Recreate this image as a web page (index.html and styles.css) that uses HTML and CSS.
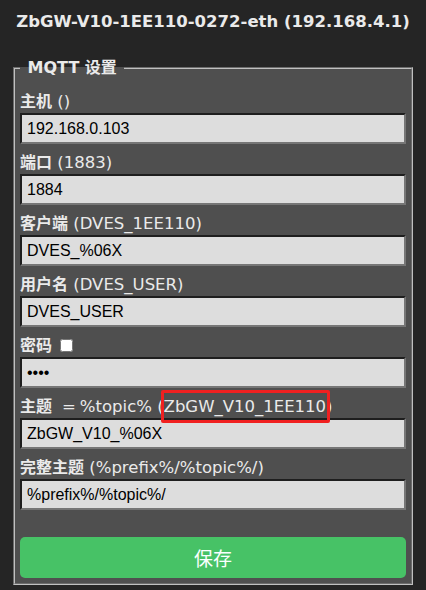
FILE: index.html
```html
<!DOCTYPE html>
<html>
<head>
  <meta charset="UTF-8">
  <meta name="viewport" content="width=device-width,initial-scale=1">
  <title>MQTT 设置</title>
  <link rel="stylesheet" href="styles.css">
</head>
<body>
  <div class="wrap">
    <h3 class="title">ZbGW-V10-1EE110-0272-eth (192.168.4.1)</h3>

    <fieldset class="box">
      <legend><b>&nbsp;MQTT 设置&nbsp;</b></legend>
      <form>
        <div class="field">
          <label><b>主机</b> ()</label>
          <input type="text" value="192.168.0.103">
        </div>
        <div class="field">
          <label><b>端口</b> (1883)</label>
          <input type="text" value="1884">
        </div>
        <div class="field">
          <label><b>客户端</b> (DVES_1EE110)</label>
          <input type="text" value="DVES_%06X">
        </div>
        <div class="field">
          <label><b>用户名</b> (DVES_USER)</label>
          <input type="text" value="DVES_USER">
        </div>
        <div class="field">
          <label><b>密码</b> <input type="checkbox" class="show"></label>
          <input type="password" value="1234">
        </div>
        <div class="field">
          <label><b>主题</b><span class="eq">=</span>%topic% (<span class="mark">ZbGW_V10_1EE110</span>)</label>
          <input type="text" value="ZbGW_V10_%06X">
        </div>
        <div class="field">
          <label><b>完整主题</b> (%prefix%/%topic%/)</label>
          <input type="text" value="%prefix%/%topic%/">
        </div>
        <button type="button" class="btn">保存</button>
      </form>
    </fieldset>
  </div>
</body>
</html>
```

FILE: styles.css
```css
body {
  margin: 0;
  background: #252525;
  color: #eaeaea;
  font-family: "DejaVu Sans", "Noto Sans CJK SC", sans-serif;
  font-size: 16px;
}
.wrap {
  padding: 0 13px;
}
.title {
  margin: 0 0 24px;
  padding-top: 10px;
  line-height: 24px;
  text-align: center;
  font-size: 16.5px;
  font-weight: bold;
}
.box {
  margin: 0;
  padding: 13px 5px 5px;
  background: #4f4f4f;
  border: 2px groove #c0c0c0;
}
.box legend {
  padding: 0 2px;
  line-height: 20px;
}
.field {
  margin-bottom: 8px;
}
.field label {
  display: block;
  line-height: 22px;
  font-size: 16.5px;
}
.field label b {
  font-size: 16px;
}
.eq {
  margin: 0 4px 0 10px;
}
.field input[type=text],
.field input[type=password] {
  display: block;
  width: 100%;
  height: 31px;
  box-sizing: border-box;
  margin: 0;
  padding: 0 5px;
  background: #dddddd;
  color: #000000;
  font-family: "Liberation Sans", sans-serif;
  font-size: 16px;
  border-width: 2px;
  border-style: solid;
  border-color: #1e1e1e #767676 #767676 #1e1e1e;
  outline: none;
}
.show {
  width: 13px;
  height: 13px;
  margin: 0 0 0 3px;
  vertical-align: -1px;
}
.mark {
  position: relative;
}
.mark:after {
  content: "";
  position: absolute;
  left: -3px;
  right: -4px;
  top: -7px;
  bottom: -7px;
  border: 3px solid #f02020;
  border-radius: 2px;
}
.btn {
  display: block;
  width: 100%;
  margin-top: 27px;
  height: 41px;
  border: 0;
  border-radius: 5px;
  background: #47c266;
  color: #faffff;
  font-family: "Liberation Sans", "Noto Sans CJK SC", sans-serif;
  font-size: 19px;
}
```
